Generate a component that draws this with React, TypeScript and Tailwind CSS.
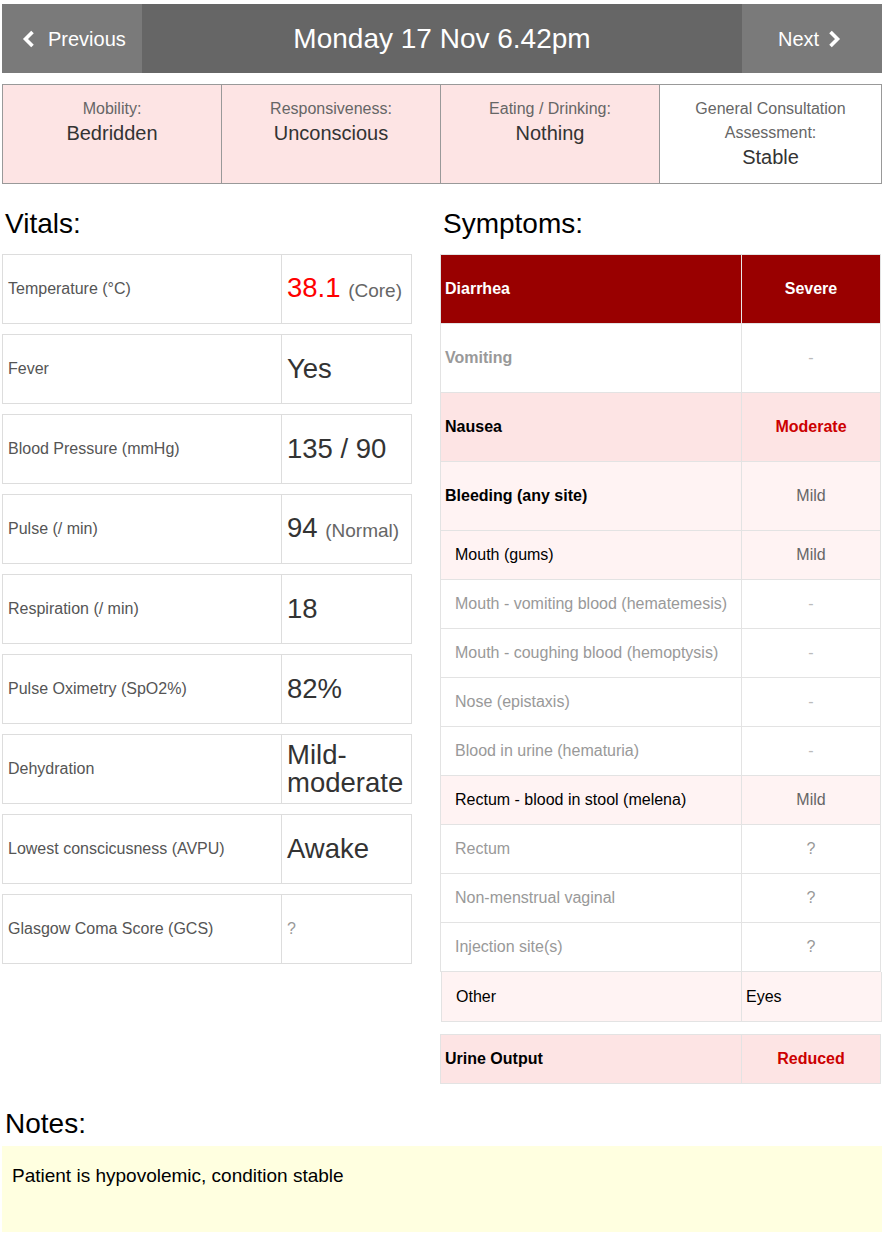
type Vital = { label: string; value: React.ReactNode; small?: boolean }

const vitals: Vital[] = [
  {
    label: "Temperature (°C)",
    value: (
      <span>
        <span className="text-[#ff0000]">38.1</span>{" "}
        <span className="text-[19px] text-[#666]">(Core)</span>
      </span>
    ),
  },
  { label: "Fever", value: "Yes" },
  { label: "Blood Pressure (mmHg)", value: "135 / 90" },
  {
    label: "Pulse (/ min)",
    value: (
      <span>
        94 <span className="text-[19px] text-[#666]">(Normal)</span>
      </span>
    ),
  },
  { label: "Respiration (/ min)", value: "18" },
  { label: "Pulse Oximetry (SpO2%)", value: "82%" },
  { label: "Dehydration", value: "Mild-moderate" },
  { label: "Lowest conscicusness (AVPU)", value: "Awake" },
  { label: "Glasgow Coma Score (GCS)", value: "?", small: true },
]

type Sym = {
  name: string
  value: string
  kind: "head" | "sub"
  tone: "dark" | "pink" | "light" | "white"
  muted?: boolean
  valueClass?: string
}

const symptoms: Sym[] = [
  { name: "Diarrhea", value: "Severe", kind: "head", tone: "dark", valueClass: "text-white font-bold" },
  { name: "Vomiting", value: "-", kind: "head", tone: "white", muted: true, valueClass: "text-[#bbb]" },
  { name: "Nausea", value: "Moderate", kind: "head", tone: "pink", valueClass: "text-[#cc0000] font-bold" },
  { name: "Bleeding (any site)", value: "Mild", kind: "head", tone: "light", valueClass: "text-[#666]" },
  { name: "Mouth (gums)", value: "Mild", kind: "sub", tone: "light", valueClass: "text-[#666]" },
  { name: "Mouth - vomiting blood (hematemesis)", value: "-", kind: "sub", tone: "white", muted: true, valueClass: "text-[#bbb]" },
  { name: "Mouth - coughing blood (hemoptysis)", value: "-", kind: "sub", tone: "white", muted: true, valueClass: "text-[#bbb]" },
  { name: "Nose (epistaxis)", value: "-", kind: "sub", tone: "white", muted: true, valueClass: "text-[#bbb]" },
  { name: "Blood in urine (hematuria)", value: "-", kind: "sub", tone: "white", muted: true, valueClass: "text-[#bbb]" },
  { name: "Rectum - blood in stool (melena)", value: "Mild", kind: "sub", tone: "light", valueClass: "text-[#666]" },
  { name: "Rectum", value: "?", kind: "sub", tone: "white", muted: true, valueClass: "text-[#999]" },
  { name: "Non-menstrual vaginal", value: "?", kind: "sub", tone: "white", muted: true, valueClass: "text-[#999]" },
  { name: "Injection site(s)", value: "?", kind: "sub", tone: "white", muted: true, valueClass: "text-[#999]" },
]

const toneBg = {
  dark: "bg-[#990000]",
  pink: "bg-[#fde4e4]",
  light: "bg-[#fff3f3]",
  white: "bg-white",
}

function Chevron({ dir }: { dir: "left" | "right" }) {
  return (
    <svg width="13" height="18" viewBox="0 0 13 18" className="shrink-0">
      <path
        d={dir === "left" ? "M10.5 2 L3.5 9 L10.5 16" : "M2.5 2 L9.5 9 L2.5 16"}
        fill="none"
        stroke="white"
        strokeWidth="3.6"
        strokeLinecap="butt"
        strokeLinejoin="miter"
      />
    </svg>
  )
}

function SummaryCell({ label, value, pink, last }: { label: React.ReactNode; value: string; pink?: boolean; last?: boolean }) {
  return (
    <div
      className={`text-center pt-[12px] leading-[24px] ${pink ? "bg-[#fde4e4]" : "bg-white"} ${
        last ? "flex-1" : "w-[219px] border-r border-[#999]"
      }`}
    >
      <div className="text-[16px] text-[#666]">{label}</div>
      <div className="text-[20px] text-[#333]">{value}</div>
    </div>
  )
}

function SymptomRow({ s }: { s: Sym }) {
  const head = s.kind === "head"
  const nameColor = s.tone === "dark" ? "text-white" : s.muted ? "text-[#999]" : "text-black"
  return (
    <div className={`flex border-b border-[#e3e3e3] ${toneBg[s.tone]} ${head ? "h-[69px]" : "h-[49px]"}`}>
      <div
        className={`w-[301px] flex items-center border-r ${s.tone === "dark" ? "border-[#e8e8e8]" : "border-[#e3e3e3]"} ${
          head ? "pl-[4px] font-bold" : "pl-[14px]"
        } ${nameColor}`}
      >
        {s.name}
      </div>
      <div className={`flex-1 flex items-center justify-center ${s.valueClass ?? ""}`}>{s.value}</div>
    </div>
  )
}

export default function App() {
  return (
    <div className="w-[884px] px-[2px] pt-[4px] pb-[2px] bg-white" style={{ fontFamily: '"Liberation Sans", Arial, sans-serif' }}>
      {/* header bar */}
      <div className="flex h-[69px] w-[880px] bg-[#666] text-white">
        <button className="w-[140px] bg-[#7a7a7a] flex items-center gap-[13px] text-[20px] pl-[20px]">
          <Chevron dir="left" />
          <span>Previous</span>
        </button>
        <div className="flex-1 flex items-center justify-center text-[28px]">Monday 17 Nov 6.42pm</div>
        <button className="w-[140px] bg-[#7a7a7a] flex items-center gap-[9px] text-[20px] pl-[36px]">
          <span>Next</span>
          <Chevron dir="right" />
        </button>
      </div>

      {/* summary */}
      <div className="mt-[11px] flex h-[100px] w-[880px] border border-[#999]">
        <SummaryCell label="Mobility:" value="Bedridden" pink />
        <SummaryCell label="Responsiveness:" value="Unconscious" pink />
        <SummaryCell label="Eating / Drinking:" value="Nothing" pink />
        <SummaryCell
          label={
            <>
              General Consultation
              <br />
              Assessment:
            </>
          }
          value="Stable"
          last
        />
      </div>

      <div className="flex gap-[28px] mt-[24px]">
        {/* vitals */}
        <div className="w-[410px]">
          <h2 className="text-[28px] leading-[32px] text-black pl-[3px] mb-[14px]">Vitals:</h2>
          <div className="flex flex-col gap-[10px]">
            {vitals.map((v) => (
              <div key={v.label} className="flex h-[70px] border border-[#ddd]">
                <div className="w-[279px] border-r border-[#ddd] flex items-center pl-[5px] text-[16px] text-[#555]">
                  {v.label}
                </div>
                <div
                  className={`flex-1 flex items-center pl-[5px] pr-[3px] ${
                    v.small ? "text-[16px] text-[#999]" : "text-[27.5px] leading-[28px] text-[#333]"
                  }`}
                >
                  {v.value}
                </div>
              </div>
            ))}
          </div>
        </div>

        {/* symptoms */}
        <div className="w-[442px]">
          <h2 className="text-[28px] leading-[32px] text-black pl-[3px] mb-[14px]">Symptoms:</h2>
          <div className="w-[441px] border-l border-r border-t border-[#e3e3e3] text-[16px]">
            {symptoms.map((s) => (
              <SymptomRow key={s.name} s={s} />
            ))}
          </div>
          <div className="ml-[1px] w-[441px] flex h-[50px] border-l border-r border-b border-[#e3e3e3] bg-[#fff3f3] text-[16px] text-black">
            <div className="w-[300px] border-r border-[#e3e3e3] flex items-center pl-[14px]">Other</div>
            <div className="flex-1 flex items-center pl-[4px]">Eyes</div>
          </div>
          <div className="mt-[12px] w-[441px] flex h-[50px] border border-[#e3e3e3] bg-[#fde4e4] text-[16px]">
            <div className="w-[301px] border-r border-[#e3e3e3] flex items-center pl-[4px] font-bold text-black">
              Urine Output
            </div>
            <div className="flex-1 flex items-center justify-center font-bold text-[#cc0000]">Reduced</div>
          </div>
        </div>
      </div>

      {/* notes */}
      <h2 className="mt-[24px] text-[28px] leading-[32px] text-black pl-[3px] mb-[6px]">Notes:</h2>
      <div className="w-[880px] h-[86px] bg-[#ffffe0] px-[10px] pt-[18px] text-[19px] leading-[24px] text-black">
        Patient is hypovolemic, condition stable
      </div>
    </div>
  )
}
